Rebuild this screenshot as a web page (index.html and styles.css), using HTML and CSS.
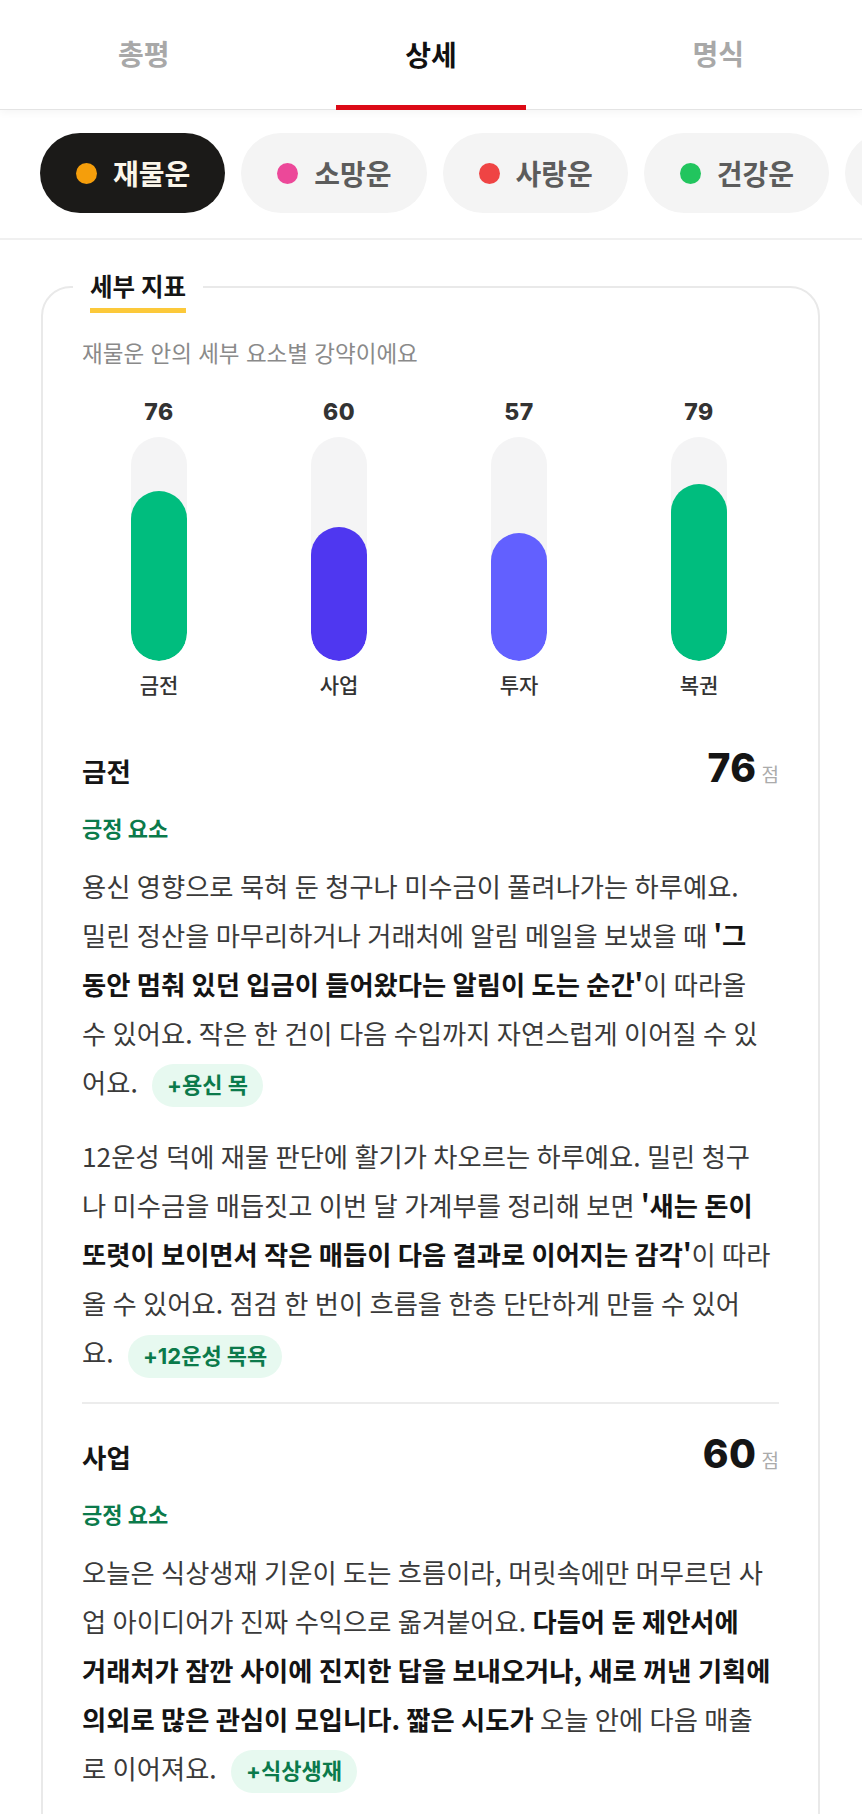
FILE: index.html
```html
<!DOCTYPE html>
<html lang="ko">
<head>
<meta charset="utf-8">
<title>상세</title>
<link rel="stylesheet" href="styles.css">
</head>
<body>
<nav class="tabs">
  <a class="tab">총평</a>
  <a class="tab active">상세<span class="indicator"></span></a>
  <a class="tab">명식</a>
</nav>

<div class="chips">
  <span class="chip on"><i class="dot orange"></i>재물운</span>
  <span class="chip"><i class="dot pink"></i>소망운</span>
  <span class="chip"><i class="dot red"></i>사랑운</span>
  <span class="chip"><i class="dot green"></i>건강운</span>
  <span class="chip"><i class="dot blue"></i>직업운</span>
</div>

<main class="content">
  <fieldset class="card">
    <legend class="card-title"><span>세부 지표</span></legend>
    <p class="subtitle">재물운 안의 세부 요소별 강약이에요</p>

    <div class="bars">
      <div class="bar">
        <div class="bar-value">76</div>
        <div class="track"><div class="fill green" style="height:76%"></div></div>
        <div class="bar-label">금전</div>
      </div>
      <div class="bar">
        <div class="bar-value">60</div>
        <div class="track"><div class="fill indigo" style="height:60%"></div></div>
        <div class="bar-label">사업</div>
      </div>
      <div class="bar">
        <div class="bar-value">57</div>
        <div class="track"><div class="fill violet" style="height:57%"></div></div>
        <div class="bar-label">투자</div>
      </div>
      <div class="bar">
        <div class="bar-value">79</div>
        <div class="track"><div class="fill green" style="height:79%"></div></div>
        <div class="bar-label">복권</div>
      </div>
    </div>

    <div class="items">
      <section class="item">
        <div class="item-head">
          <h3 class="item-name">금전</h3>
          <div class="score"><span class="score-num">76</span><span class="score-unit">점</span></div>
        </div>
        <p class="kind">긍정 요소</p>
        <p class="desc">용신 영향으로 묵혀 둔 청구나 미수금이 풀려나가는 하루예요.<br>밀린 정산을 마무리하거나 거래처에 알림 메일을 보냈을 때 <b>'그<br>동안 멈춰 있던 입금이 들어왔다는 알림이 도는 순간'</b>이 따라올<br>수 있어요. 작은 한 건이 다음 수입까지 자연스럽게 이어질 수 있<br>어요. <span class="tag">+용신 목</span></p>
        <p class="desc">12운성 덕에 재물 판단에 활기가 차오르는 하루예요. 밀린 청구<br>나 미수금을 매듭짓고 이번 달 가계부를 정리해 보면 <b>'새는 돈이<br>또렷이 보이면서 작은 매듭이 다음 결과로 이어지는 감각'</b>이 따라<br>올 수 있어요. 점검 한 번이 흐름을 한층 단단하게 만들 수 있어<br>요. <span class="tag">+12운성 목욕</span></p>
      </section>

      <section class="item">
        <div class="item-head">
          <h3 class="item-name">사업</h3>
          <div class="score"><span class="score-num">60</span><span class="score-unit">점</span></div>
        </div>
        <p class="kind">긍정 요소</p>
        <p class="desc">오늘은 식상생재 기운이 도는 흐름이라, 머릿속에만 머무르던 사<br>업 아이디어가 진짜 수익으로 옮겨붙어요. <b>다듬어 둔 제안서에<br>거래처가 잠깐 사이에 진지한 답을 보내오거나, 새로 꺼낸 기획에<br>의외로 많은 관심이 모입니다. 짧은 시도가</b> 오늘 안에 다음 매출<br>로 이어져요. <span class="tag">+식상생재</span></p>
      </section>

      <section class="item">
        <div class="item-head">
          <h3 class="item-name">투자</h3>
          <div class="score"><span class="score-num">57</span><span class="score-unit">점</span></div>
        </div>
        <p class="kind">긍정 요소</p>
        <p class="desc">흐름을 천천히 살피며 작은 기회를 고르는 하루예요.</p>
      </section>
    </div>
  </fieldset>
</main>
</body>
</html>
```

FILE: styles.css
```css
* { box-sizing: border-box; }

html, body {
  margin: 0;
  padding: 0;
  background: #ffffff;
}

body {
  font-family: Inter, "Noto Sans CJK KR", "Noto Sans", sans-serif;
  color: #333333;
  overflow-x: hidden;
}

/* ---------- tabs ---------- */
.tabs {
  display: flex;
  height: 110px;
  background: #ffffff;
  border-bottom: 1px solid #e4e4e4;
  box-shadow: 0 3px 8px rgba(0, 0, 0, 0.04);
  position: relative;
  z-index: 1;
}

.tab {
  flex: 1;
  display: flex;
  flex-direction: column;
  align-items: center;
  justify-content: flex-end;
  font-size: 28px;
  font-weight: 600;
  color: #a8a8a8;
  line-height: 38px;
  padding-bottom: 35px;
}

.tab.active {
  color: #111111;
  font-weight: 700;
  padding-bottom: 0;
}

.indicator {
  display: block;
  width: 190px;
  height: 5px;
  margin-top: 30px;
  margin-bottom: -1px;
  background: #dc0a16;
}

/* ---------- chips ---------- */
.chips {
  display: flex;
  gap: 16px;
  padding: 23px 0 25px 40px;
  border-bottom: 2px solid #f0f0f0;
  overflow: hidden;
  white-space: nowrap;
}

.chip {
  flex-shrink: 0;
  display: flex;
  align-items: center;
  gap: 16px;
  height: 80px;
  padding: 0 35px 0 36px;
  border-radius: 40px;
  background: #f4f4f4;
  font-size: 28px;
  font-weight: 700;
  color: #5c5c5c;
}

.chip.on {
  background: #1b1a18;
  color: #fbf6ea;
}

.dot {
  display: block;
  width: 21px;
  height: 21px;
  border-radius: 50%;
}
.dot.orange { background: #f59e0b; }
.dot.pink { background: #ec4899; }
.dot.red { background: #ef4444; }
.dot.green { background: #22c55e; }
.dot.blue { background: #3b82f6; }

/* ---------- card ---------- */
.content {
  padding: 31px 42px 0 41px;
}

.card {
  margin: 0;
  min-width: 0;
  border: 2px solid #e9e9e9;
  border-radius: 30px;
  padding: 0 39px 40px 39px;
}

.card-title {
  margin-left: -9px;
  padding: 0 17px;
  font-size: 24.5px;
  font-weight: 700;
  line-height: 32px;
  color: #151515;
}

.card-title span {
  text-decoration: underline;
  text-decoration-color: #fcc93a;
  text-decoration-thickness: 5px;
  text-underline-offset: 12px;
  text-decoration-skip-ink: none;
}

.subtitle {
  margin: 36px 0 0;
  font-size: 22.5px;
  line-height: 30px;
  color: #8a8a8a;
}

/* ---------- bars ---------- */
.bars {
  display: grid;
  grid-template-columns: repeat(4, 1fr);
  margin: 29px -10px 0 -13px;
}

.bar {
  display: flex;
  flex-direction: column;
  align-items: center;
}

.bar-value {
  font-size: 23px;
  font-weight: 800;
  line-height: 28px;
  color: #333333;
  letter-spacing: 0.5px;
}

.track {
  margin-top: 11px;
  width: 56px;
  height: 224px;
  border-radius: 28px;
  background: #f4f4f5;
  display: flex;
  flex-direction: column;
  justify-content: flex-end;
  overflow: hidden;
}

.fill {
  width: 100%;
  border-radius: 28px;
}
.fill.green { background: #00bd7e; }
.fill.indigo { background: #4f37f0; }
.fill.violet { background: #6260ff; }

.bar-label {
  margin-top: 12px;
  font-size: 21px;
  font-weight: 500;
  line-height: 26px;
  color: #333333;
}

/* ---------- items ---------- */
.items {
  margin-top: 19px;
}

.item {
  padding: 28px 0 24px;
  border-bottom: 2px solid #ececec;
}

.item-head {
  display: flex;
  justify-content: space-between;
  align-items: baseline;
  height: 44px;
  line-height: 44px;
}

.item-name {
  margin: 0;
  font-size: 26.5px;
  font-weight: 700;
  color: #151515;
}

.score {
  display: flex;
  align-items: baseline;
  gap: 5px;
}

.score-num {
  font-size: 39px;
  font-weight: 800;
  color: #151515;
  letter-spacing: 0.5px;
}

.score-unit {
  font-size: 19px;
  color: #ababab;
}

.kind {
  margin: 25px 0 0;
  font-size: 22px;
  font-weight: 700;
  line-height: 28px;
  color: #0b7a4b;
}

.desc {
  margin: 18px -6px 0 0;
  font-family: "Noto Sans CJK KR", Inter, sans-serif;
  font-size: 26.3px;
  word-spacing: -1px;
  line-height: 49px;
  color: #3a3a3a;
}

.desc + .desc {
  margin-top: 24px;
}

.desc b {
  font-weight: 700;
  color: #141414;
}

.tag {
  display: inline-block;
  margin-left: 8px;
  padding: 0 15px;
  height: 43px;
  line-height: 43px;
  border-radius: 22px;
  background: #e7f9f0;
  color: #0b7a4b;
  font-family: Inter, "Noto Sans CJK KR", sans-serif;
  font-size: 22px;
  font-weight: 700;
  word-spacing: 0;
  vertical-align: middle;
}
```
